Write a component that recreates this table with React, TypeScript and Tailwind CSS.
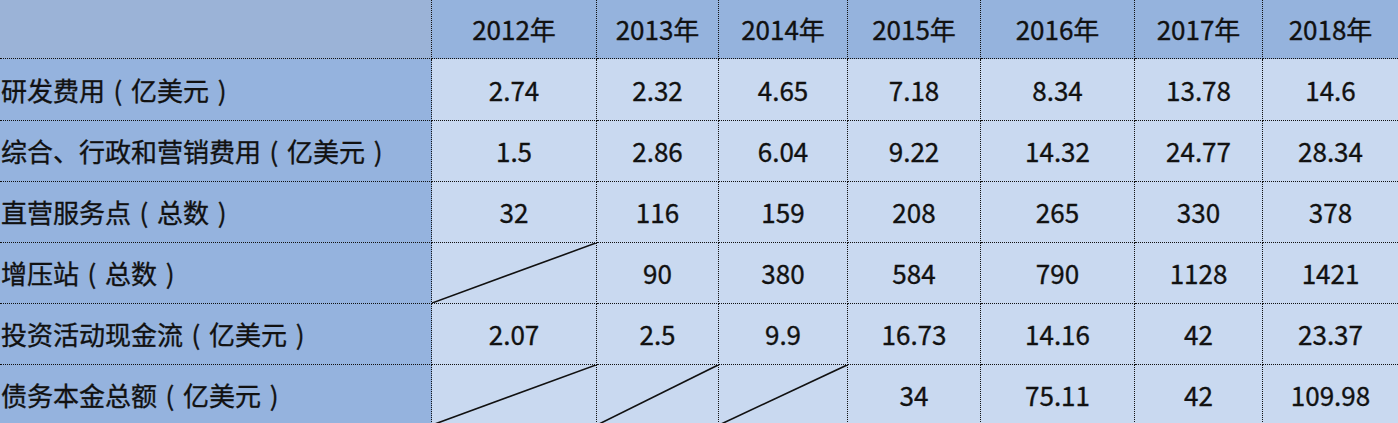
import React from "react";

const years = ["2012年", "2013年", "2014年", "2015年", "2016年", "2017年", "2018年"];

type Cell = string | null; // null = diagonal slash

const rows: { name: string; unit: string; values: Cell[] }[] = [
  { name: "研发费用", unit: "亿美元", values: ["2.74", "2.32", "4.65", "7.18", "8.34", "13.78", "14.6"] },
  { name: "综合、行政和营销费用", unit: "亿美元", values: ["1.5", "2.86", "6.04", "9.22", "14.32", "24.77", "28.34"] },
  { name: "直营服务点", unit: "总数", values: ["32", "116", "159", "208", "265", "330", "378"] },
  { name: "增压站", unit: "总数", values: [null, "90", "380", "584", "790", "1128", "1421"] },
  { name: "投资活动现金流", unit: "亿美元", values: ["2.07", "2.5", "9.9", "16.73", "14.16", "42", "23.37"] },
  { name: "债务本金总额", unit: "亿美元", values: [null, null, null, "34", "75.11", "42", "109.98"] },
];

function Slash() {
  return (
    <svg
      className="absolute inset-0 h-full w-full"
      viewBox="0 0 100 100"
      preserveAspectRatio="none"
    >
      <line
        x1="0"
        y1="100"
        x2="100"
        y2="0"
        stroke="#111"
        strokeWidth="1.6"
        vectorEffect="non-scaling-stroke"
      />
    </svg>
  );
}

function Paren({ ch }: { ch: string }) {
  return <span className="inline-block w-[26px] text-center">{ch}</span>;
}

export default function App() {
  return (
    <div
      className="w-[1398px] h-[423px] overflow-hidden bg-[#c9d9f0] text-[#111] font-normal [-webkit-text-stroke:0.35px_#111]"
      style={{ fontFamily: '"Noto Sans CJK SC", "Noto Sans", sans-serif' }}
    >
      <div className="grid grid-cols-[432px_165px_122px_129px_133px_154px_128px_135px] grid-rows-[59px_62px_61px_61px_61px_61px_61px] text-[26px] leading-none">
        <div className="bg-[#9bb3d7] border-r border-b border-dotted border-[#111]" />
        {years.map((y, i) => (
          <div
            key={y}
            className={`flex items-center justify-center bg-[#95b3dd] border-b border-dotted border-[#111] ${i < years.length - 1 ? "border-r" : ""}`}
          >
            {y}
          </div>
        ))}
        {rows.map((r) => (
          <React.Fragment key={r.name}>
            <div className="flex items-center pl-[1px] bg-[#95b3de] border-r border-b border-dotted border-[#111] whitespace-nowrap">
              <span>{r.name}</span>
              <Paren ch="(" />
              <span>{r.unit}</span>
              <Paren ch=")" />
            </div>
            {r.values.map((v, i) => (
              <div
                key={i}
                className={`relative flex items-center justify-center bg-[#c9d9f0] border-b border-dotted border-[#111] ${i < r.values.length - 1 ? "border-r" : ""}`}
              >
                {v === null ? <Slash /> : v}
              </div>
            ))}
          </React.Fragment>
        ))}
      </div>
    </div>
  );
}
